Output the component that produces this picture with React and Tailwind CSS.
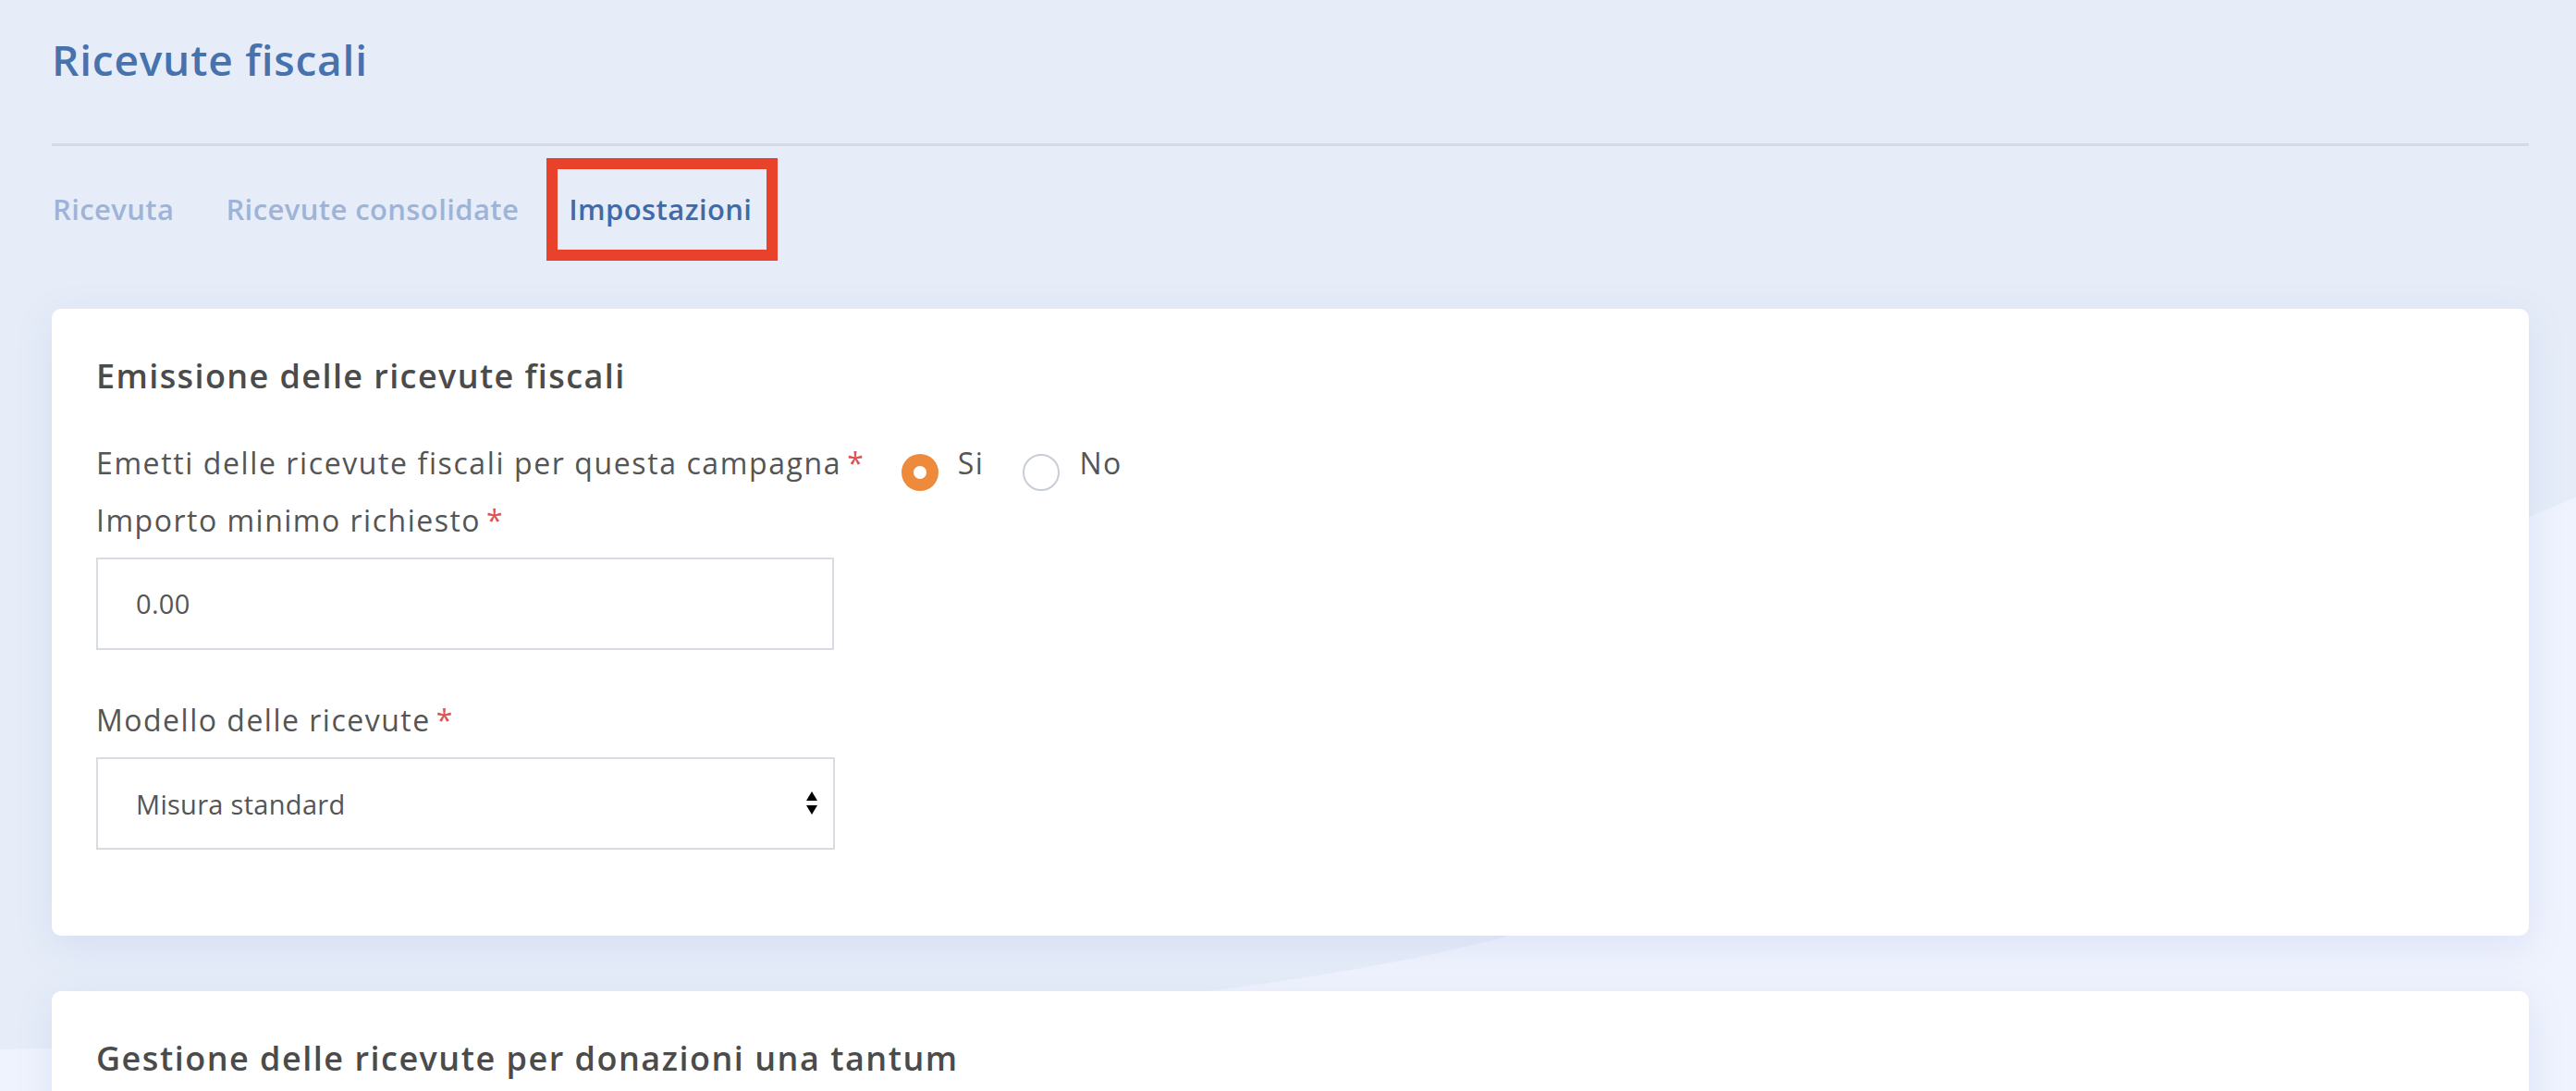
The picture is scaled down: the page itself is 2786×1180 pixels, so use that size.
import React from 'react';

function Required() {
  return <span className="ml-[6px] tracking-normal text-[#e0524f]">*</span>;
}

function Radio({ checked, label }) {
  return (
    <label className="flex items-start">
      {checked ? (
        <span className="mt-[9px] flex h-[40px] w-[40px] items-center justify-center rounded-full bg-[#ee8a3b]">
          <span className="h-[14px] w-[14px] rounded-full bg-white" />
        </span>
      ) : (
        <span className="mt-[9px] h-[40px] w-[40px] rounded-full border-2 border-[#c8cdd8] bg-white" />
      )}
      <span className="ml-[21px] text-[32px] leading-[1.2] tracking-[1.5px] text-[#555]">{label}</span>
    </label>
  );
}

export default function App() {
  return (
    <div
      className="relative min-h-[1180px] overflow-hidden bg-[#e6edf8]"
      style={{ fontFamily: '"Open Sans", Lato, sans-serif' }}
    >
      {/* background wave */}
      <svg
        className="absolute inset-0 h-[1180px] w-[2786px]"
        viewBox="0 0 2786 1180"
        preserveAspectRatio="none"
        aria-hidden="true"
      >
        <path
          d="M0 1135 C 700 1120, 1250 1110, 1626 1014 L 2786 538 L 2786 1180 L 0 1180 Z"
          fill="#eff3fd"
        />
      </svg>

      <div className="relative pl-[56px] pr-[51px] pt-[37px]">
        <h1 className="text-[46px] font-semibold leading-[1.2] tracking-[0.8px] text-[#4672ae]">
          Ricevute fiscali
        </h1>

        <div className="mt-[63px] h-[3px] bg-[#d3dbe8]" />

        {/* Tabs */}
        <div className="mt-[13px] flex items-center text-[31px] font-semibold leading-[1.2] tracking-[0.4px]">
          <span className="ml-[1px] text-[#9db4d8]">Ricevuta</span>
          <span className="ml-[56px] text-[#9db4d8]">Ricevute consolidate</span>
          <span className="ml-[30px] border-[12px] border-[#e8432a] py-[25px] pl-[12px] pr-[16px] text-[#3f6baa]">
            Impostazioni
          </span>
        </div>

        {/* Card 1 */}
        <div className="mt-[52px] rounded-[10px] bg-white px-[48px] pb-[93px] pt-[51px] shadow-[0_10px_40px_rgba(110,130,210,0.14)]">
          <h2 className="text-[36px] font-semibold leading-[1.2] tracking-[1.4px] text-[#4b4b4b]">
            Emissione delle ricevute fiscali
          </h2>

          <div className="mt-[53px] flex h-[38px] items-start">
            <span className="text-[32px] leading-[1.2] tracking-[1.6px] text-[#555]">
              Emetti delle ricevute fiscali per questa campagna
              <Required />
            </span>
            <div className="ml-[41px] flex items-start gap-[42px]">
              <Radio checked label="Si" />
              <Radio label="No" />
            </div>
          </div>

          <div className="mt-[24px] text-[32px] leading-[1.2] tracking-[1.5px] text-[#555]">
            Importo minimo richiesto
            <Required />
          </div>
          <div className="mt-[21px] flex h-[100px] w-[798px] items-center border-2 border-[#d7dbe2] pl-[41px] text-[29px] tracking-[0.3px] text-[#555]">
            0.00
          </div>

          <div className="mt-[57px] text-[32px] leading-[1.2] tracking-[1.5px] text-[#555]">
            Modello delle ricevute
            <Required />
          </div>
          <div className="mt-[21px] flex h-[100px] w-[799px] items-center justify-between border-2 border-[#d7dbe2] pl-[41px] pr-[17px] text-[29px] tracking-[0.3px] text-[#555]">
            <span>Misura standard</span>
            <svg width="12" height="26" viewBox="0 0 12 26" aria-hidden="true">
              <path d="M6 0 L12 10 L0 10 Z" fill="#000" />
              <path d="M0 15 L12 15 L6 25 Z" fill="#000" />
            </svg>
          </div>
        </div>

        {/* Card 2 */}
        <div className="mt-[60px] h-[400px] rounded-[10px] bg-white px-[48px] pt-[51px] shadow-[0_10px_40px_rgba(110,130,210,0.14)]">
          <h2 className="text-[36px] font-semibold leading-[1.2] tracking-[1.5px] text-[#4b4b4b]">
            Gestione delle ricevute per donazioni una tantum
          </h2>
        </div>
      </div>
    </div>
  );
}
